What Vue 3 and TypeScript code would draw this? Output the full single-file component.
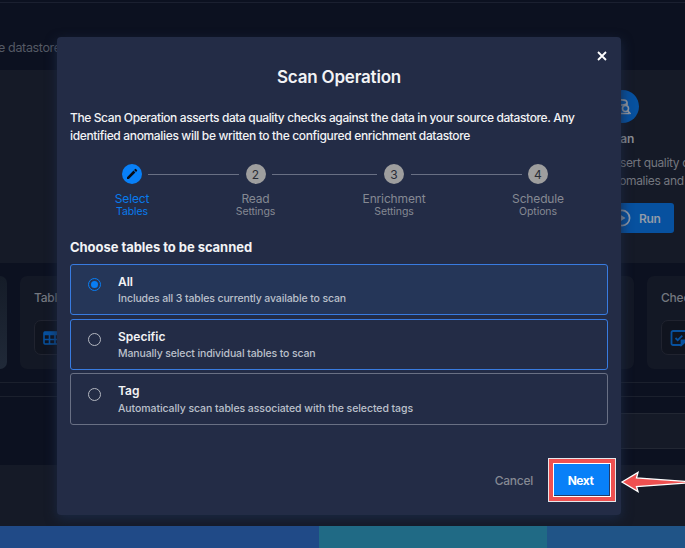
<script setup lang="ts">
import { ref } from 'vue'

interface Step { title: string; sub: string; key: string }
interface Choice { title: string; text: string; key: string; outlined: boolean }

const steps: Step[] = [
  { key: 'tables', title: 'Select', sub: 'Tables' },
  { key: 'read', title: 'Read', sub: 'Settings' },
  { key: 'enrich', title: 'Enrichment', sub: 'Settings' },
  { key: 'schedule', title: 'Schedule', sub: 'Options' },
]
const choices: Choice[] = [
  { key: 'all', title: 'All', text: 'Includes all 3 tables currently available to scan', outlined: true },
  { key: 'specific', title: 'Specific', text: 'Manually select individual tables to scan', outlined: true },
  { key: 'tag', title: 'Tag', text: 'Automatically scan tables associated with the selected tags', outlined: false },
]
const selected = ref('all')
</script>

<template>
  <div class="screen">
    <div class="page">
      <header class="top"><span class="crumb">e datastore</span></header>
      <section class="ops">
        <div class="op">
          <span class="op-badge">
            <svg width="18" height="18" viewBox="0 0 18 18" fill="none" stroke="#969ba3" stroke-width="1.600">
              <path d="M2 4.500c0-3.500 11-3.500 11 0s-11 3-11 0v9c0 1.500 2 2 4 2M13 4v3" />
              <circle cx="11.500" cy="10.500" r="3" /><path d="M7 15.500h8M13.500 12.500l3 3.500" />
            </svg>
          </span>
          <h3>Scan</h3>
          <p>Assert quality checks<br>anomalies and</p>
          <button class="run">
            <svg width="18" height="18" viewBox="0 0 18 18"><circle cx="9" cy="9" r="7.600" fill="none" stroke="#929ba9" stroke-width="1.700" /><path d="M7 5.500l5.500 3.500L7 12.500z" fill="#929ba9" /></svg>
            Run
          </button>
        </div>
      </section>
      <section class="cards">
        <div class="card first"></div>
        <div class="card">
          <span class="card-title">Tables</span>
          <span class="tile">
            <svg width="18" height="14" viewBox="0 0 18 14" fill="none" stroke="#07519f" stroke-width="1.600"><rect x="1" y="1" width="16" height="12" rx="1" /><path d="M1 8.500h16M6.500 3v10M12 3v10" /><path d="M1 2.500h16" stroke-width="3.500" /></svg>
          </span>
        </div>
        <div class="card">
          <span class="card-title">Checks</span>
          <span class="tile">
            <svg width="18" height="18" viewBox="0 0 18 18" fill="none" stroke="#07519f" stroke-width="1.800"><path d="M11 16H3a1.500 1.500 0 0 1-1.500-1.500v-11A1.500 1.500 0 0 1 3 2h12a1.500 1.500 0 0 1 1.500 1.500V11zM5.500 9l2.200 2.200 4.600-4.600" /><path d="M11.500 16v-4.500h5z" fill="#07519f" /></svg>
          </span>
        </div>
      </section>
      <div class="rule"></div>
      <div class="search"><div class="field"></div></div>
      <div class="lower"></div>
      <div class="chart"><i class="bar a"></i><i class="bar b"></i><i class="bar c"></i></div>
    </div>

    <div class="dialog" role="dialog">
      <button class="close" aria-label="Close">
        <svg width="10" height="10" viewBox="0 0 10 10" stroke="#fff" stroke-width="1.800"><path d="M1 1l8 8M9 1l-8 8" /></svg>
      </button>
      <h1>Scan Operation</h1>
      <p class="intro"><span class="l1">The Scan Operation asserts data quality checks against the data in your source datastore. Any</span><br><span class="l2">identified anomalies will be written to the configured enrichment datastore</span></p>
      <div class="stepper">
        <template v-for="(s, i) in steps" :key="s.key">
          <span v-if="i > 0" class="link"></span>
          <div class="step" :class="[s.key, { active: i === 0 }]">
            <span class="dot">
              <svg v-if="i === 0" width="12" height="12" viewBox="0 0 24 24"><path fill="#080c15" d="M2 18.300V22h3.700L18.800 9 15 5.200zM22 5.900a1.300 1.300 0 0 0 0-1.800L19.900 2a1.300 1.300 0 0 0-1.800 0l-1.900 2L20 7.800z" /></svg>
              <template v-else>{{ i + 1 }}</template>
            </span>
            <span class="name">{{ s.title }}</span>
            <span class="sub">{{ s.sub }}</span>
          </div>
        </template>
      </div>
      <h2>Choose tables to be scanned</h2>
      <div class="choices">
        <div v-for="c in choices" :key="c.key" class="choice" :class="[c.key, { outlined: c.outlined, on: selected === c.key }]" @click="selected = c.key">
          <span class="radio"></span>
          <div class="copy"><strong>{{ c.title }}</strong><span>{{ c.text }}</span></div>
        </div>
      </div>
      <footer><button class="cancel">Cancel</button><span class="mark"><button class="next">Next</button></span></footer>
    </div>

    <svg class="arrow" width="66" height="24" viewBox="0 0 66 24"><path d="M2 12L18 2.500l-1.500 5.500L66 11.500v1.500L16.500 16.500l1.500 5z" fill="#ef5050" stroke="#fff" stroke-width="1.300" /></svg>
  </div>
</template>

<style>
body { margin: 0; overflow: hidden; }
</style>
<style scoped>
* { box-sizing: border-box; }
h1, h2, h3, p { margin: 0; }
button { border: 0; padding: 0; background: none; font: inherit; color: inherit; letter-spacing: inherit; }
svg { display: block; flex: none; }
.screen { position: relative; width: 685px; height: 548px; overflow: hidden; font-family: Inter, "Open Sans", sans-serif; background: #0c1120; }
.page { height: 548px; display: flex; flex-direction: column; color: #74777f; }
.top { height: 70px; padding-top: 2px; flex: none; }
.top::before { content: ''; display: block; height: 1px; background: #1b2030; }
.crumb { display: block; padding-top: 37px; font-size: 12.500px; line-height: 16px; letter-spacing: -.35px; color: #555a65; white-space: nowrap; margin-left: -2px; }
.ops { height: 193px; flex: none; background: #151a27; padding: 20px 0 0 606px; overflow: hidden; }
.op { width: 160px; font-size: 12px; }
.op-badge { width: 33px; height: 33px; border-radius: 50%; background: #07519f; display: flex; align-items: center; justify-content: center; }
.op h3 { font-size: 12px; line-height: 16px; margin-top: 8px; color: #8b8e94; font-weight: 600; letter-spacing: -.3px; }
.op p { margin-top: 7px; line-height: 18px; white-space: nowrap; letter-spacing: -.33px; }
.run { width: 68px; height: 30px; margin-top: 13px; background: #07519f; border-radius: 3px; display: flex; align-items: center; gap: 8px; padding-left: 7px; color: #929ba9; font-weight: 600; letter-spacing: -.4px; }
.cards { height: 106px; flex: none; display: grid; grid-template-columns: 7px 614px 614px; column-gap: 13px; padding: 13px 0 0; overflow: hidden; }
.card { height: 93px; background: #131825; border-radius: 7px; padding: 14px; display: flex; flex-direction: column; gap: 14px; }
.card.first { padding: 0; border-radius: 0 7px 7px 0; background: linear-gradient(#151c28, #202938); }
.card-title { font-size: 12px; line-height: 16px; font-weight: 500; letter-spacing: -.2px; }
.tile { width: 36px; height: 35px; border: 1px solid #20232f; border-radius: 7px; display: flex; align-items: center; justify-content: center; background: #10141f; }
.rule { height: 15px; margin-top: 13px; border: solid #1b202d; border-width: 1px 0; flex: none; }
.search { height: 68px; flex: none; padding: 16px 0 0 600px; }
.field { height: 36px; background: #151a27; border: solid #222733; border-width: 1px 0; }
.lower { flex: 1; background: #151a27; }
.chart { height: 22px; flex: none; display: flex; }
.bar { display: block; height: 100%; background: #204a87; }
.bar.a { width: 319px; }
.bar.b { width: 228px; background: #206a85; }
.bar.c { flex: 1; background: #205487; }
.dialog { position: absolute; left: 57px; top: 37px; width: 564px; height: 478px; border-radius: 4px; background: #232c46; box-shadow: 0 4px 12px #1a2843; clip-path: inset(-20px -20px -11px -20px); padding: 14px 13px 0; display: flex; flex-direction: column; color: #f2f3f5; white-space: nowrap; }
.close { align-self: flex-end; width: 10px; height: 10px; margin-right: 1px; }
h1 { margin-top: 4px; text-align: center; font-size: 17px; line-height: 24px; font-weight: 600; letter-spacing: -.2px; }
.intro { margin-top: 20px; font-size: 12px; line-height: 18px; font-weight: 500; }
.l1 { letter-spacing: -.39px; }
.l2 { letter-spacing: -.345px; }
.stepper { margin-top: 19px; height: 56px; display: grid; grid-template-columns: 32px 91px 33px 105px 34px 111px 32px; padding-left: 46px; }
.link { height: 1px; background: #697084; margin-top: 10px; }
.step { display: flex; flex-direction: column; align-items: center; color: #858993; justify-self: center; width: 0; }
.dot { width: 20px; height: 20px; border-radius: 50%; background: #9e9e9e; color: #292d36; display: flex; align-items: center; justify-content: center; font-size: 12px; flex: none; }
.name { font-size: 12px; line-height: 16px; margin-top: 7px; letter-spacing: -.15px; }
.sub { font-size: 10.500px; line-height: 12px; margin-top: -1px; letter-spacing: -.1px; }
.active { color: #087bed; }
.active .dot { background: #0880f8; }
h2 { margin-top: 18px; font-size: 13px; line-height: 18px; font-weight: 700; letter-spacing: -.05px; }
.choices { margin-top: 8px; width: 538px; }
.choice { height: 51px; border: 1px solid #697084; border-radius: 3px; display: flex; padding: 10px 16px; gap: 17px; }
.specific { margin-top: 4px; }
.tag { margin-top: 3px; height: 52px; }
.outlined { border-color: #387be0; }
.on { background: #253658; }
.radio { width: 13px; height: 13px; margin: 3px 0 0 1px; border: 1px solid #b3b7c0; border-radius: 50%; flex: none; display: flex; align-items: center; justify-content: center; }
.tag .radio { margin-top: 4px; }
.on .radio { border-color: #087ef5; }
.on .radio::after { content: ''; width: 7px; height: 7px; border-radius: 50%; background: #087ef5; }
.copy { display: flex; flex-direction: column; }
.copy strong { font-size: 12px; line-height: 14px; font-weight: 600; }
.copy span { font-size: 10.500px; line-height: 14px; margin-top: 3px; font-weight: 500; color: #bbc0cb; letter-spacing: -.12px; }
.tag .copy span { letter-spacing: -.07px; margin-top: 4px; }
footer { margin-top: 33px; display: flex; justify-content: flex-end; align-items: center; font-size: 12px; margin-right: -8px; gap: 15px; }
.cancel { color: #858993; font-weight: 500; letter-spacing: -.25px; }
.mark { width: 68px; height: 44px; border: 1px solid #e5e7eb; background: #ef5050; display: flex; align-items: center; justify-content: center; }
.next { width: 58px; height: 34px; background: #0880f8; border: 1px solid #fff; box-shadow: inset -1px -1px #233b68; color: #fff; font-weight: 700; letter-spacing: -.5px; padding-right: 3px; }
.arrow { position: absolute; left: 620px; top: 470px; }
</style>
